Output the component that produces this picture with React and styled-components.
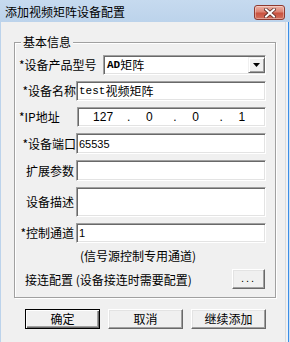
import React from 'react';
import styled, { createGlobalStyle } from 'styled-components';

const Global = createGlobalStyle`
  html, body { margin: 0; padding: 0; background: #f0f0f0; }
  body {
    width: 290px; height: 342px; overflow: hidden;
    font-family: "Noto Sans CJK SC", "Noto Sans", sans-serif;
    font-size: 12px; color: #000;
  }
`;

const Window = styled.div`
  width: 290px; height: 342px;
  display: flex; flex-direction: column;
  background: #f0f0f0;
`;

const TitleBar = styled.div`
  height: 22px; flex: none;
  display: flex; align-items: flex-start; justify-content: space-between;
  padding: 0 5px 0 5px;
  background: linear-gradient(#c6daef, #bcd3eb);
`;

const Title = styled.div`
  font-size: 12px; line-height: 14px; margin-top: 5px; color: #000;
`;

const CloseBtn = styled.div`
  width: 29px; height: 13px; margin-top: 5px;
  border: 1px solid #8e3a30; border-radius: 3px;
  background: linear-gradient(#eeb3a6 0%, #dc8474 45%, #c9523f 55%, #d2705d 100%);
  display: flex; align-items: center; justify-content: center;
  box-shadow: inset 0 0 0 1px rgba(255,255,255,0.35);
`;

const Body = styled.div`
  flex: 1; display: flex;
`;

const Client = styled.div`
  flex: 1; display: flex; flex-direction: column;
  border-left: 1px solid #bcd3eb;
  background: #f0f0f0;
`;

const RightFrame = styled.div`
  width: 5px; flex: none;
  background: linear-gradient(to right, #dcdcdc 0 1px, #eef2f7 1px 3px, #3a8ee6 3px 4px, #cfe1f5 4px 5px);
`;

const Group = styled.div`
  position: relative;
  margin: 20px 0 0 13px;
  width: 260px; height: 254px;
  border: 1px solid #a0a0a0;
  box-shadow: inset 1px 1px 0 #fff, 1px 1px 0 #fff;
  padding: 12px 9px 0 4px;
  box-sizing: border-box;
  width: 262px; height: 256px;
  display: flex; flex-direction: column; gap: 6px;
`;

const Legend = styled.div`
  position: absolute; left: 6px; top: -8px;
  padding: 0 2px; background: #f0f0f0;
  font-size: 12px; line-height: 14px;
`;

const Row = styled.div`
  display: flex; align-items: center;
  height: ${p => p.$h || 20}px;
`;

const Label = styled.div`
  width: ${p => p.$w}px; flex: none;
  text-align: ${p => p.$align || 'right'};
  white-space: nowrap;
  font-size: 12px; line-height: 14px;
  padding-right: ${p => p.$pr || 0}px;
  box-sizing: border-box;
`;

const Field = styled.div`
  flex: 1; height: 100%;
  box-sizing: border-box;
  background: #fff;
  border: 1px solid;
  border-color: #a0a0a0 #fff #fff #a0a0a0;
  box-shadow: inset 1px 1px 0 #696969, inset -1px -1px 0 #e3e3e3;
  display: flex; align-items: ${p => p.$top ? 'flex-start' : 'center'};
  padding-left: 2px;
  overflow: hidden; white-space: nowrap;
`;

const Mono = styled.span`
  font-family: "Liberation Mono", monospace; font-size: 11px;
`;

const Cjk = styled.span`
  font-family: "Noto Sans CJK SC", sans-serif; font-size: 12px; line-height: 14px;
`;

const Num = styled.span`
  font-family: "Liberation Sans", sans-serif; font-size: 11px;
`;

const SelectText = styled.div`
  flex: 1; display: flex; align-items: center; padding-left: 1px;
`;

const DropBtn = styled.div`
  width: 17px; height: 16px; flex: none; margin-right: 0px;
  box-sizing: border-box;
  background: #f0f0f0;
  border: 1px solid; border-color: #f0f0f0 #696969 #696969 #f0f0f0;
  box-shadow: inset 1px 1px 0 #fff, inset -1px -1px 0 #a0a0a0;
  display: flex; align-items: center; justify-content: center;
`;

const IpGrid = styled.div`
  flex: 1; display: grid;
  grid-template-columns: repeat(4, 1fr);
  font-family: "Liberation Sans", sans-serif; font-size: 12px;
`;

const IpCell = styled.div`
  position: relative; text-align: center;
`;

const IpDot = styled.span`
  position: absolute; right: -4px; top: 0;
`;

const Hint = styled.div`
  height: 14px; line-height: 14px; padding-left: 61px; white-space: nowrap;
`;

const ConnectRow = styled.div`
  display: flex; align-items: center; height: 20px;
  padding-left: 6px; padding-right: 1px;
  white-space: nowrap;
`;

const Button = styled.div`
  width: ${p => p.$w || 75}px; height: ${p => p.$h || 20}px;
  box-sizing: border-box; flex: none;
  background: #f0f0f0;
  display: flex; align-items: center; justify-content: center;
  font-size: 12px; line-height: 14px;
  border: 1px solid;
  border-color: ${p => p.$default ? '#000' : '#fff #696969 #696969 #fff'};
  box-shadow: ${p => p.$default
    ? 'inset 1px 1px 0 #fff, inset -1px -1px 0 #696969, inset -2px -2px 0 #a0a0a0'
    : 'inset -1px -1px 0 #a0a0a0, inset 1px 1px 0 #e3e3e3'};
  margin-left: ${p => p.$ml || 0}px;
`;

const Buttons = styled.div`
  display: flex; gap: 8px;
  margin: 11px 0 0 24px;
`;

const Dots = styled.span`
  font-family: "Liberation Sans", sans-serif; font-size: 11px; letter-spacing: 2px;
  margin-top: -3px;
`;

export default function App() {
  return (
    <Window>
      <Global />
      <TitleBar>
        <Title>添加视频矩阵设备配置</Title>
        <CloseBtn>
          <svg width="12" height="10" viewBox="0 0 12 10">
            <path d="M2 1.5 L10 8.5 M10 1.5 L2 8.5" stroke="#5a2a24" strokeWidth="3.6" strokeLinecap="square" />
            <path d="M2 1.5 L10 8.5 M10 1.5 L2 8.5" stroke="#fff" strokeWidth="2" strokeLinecap="square" />
          </svg>
        </CloseBtn>
      </TitleBar>
      <Body>
        <Client>
          <Group>
            <Legend>基本信息</Legend>
            <Row>
              <Label $w={84} $align="left">*设备产品型号</Label>
              <Field>
                <SelectText><Mono style={{ fontWeight: 700 }}>AD</Mono><Cjk>矩阵</Cjk></SelectText>
                <DropBtn>
                  <svg width="7" height="4" viewBox="0 0 7 4"><path d="M0 0 H7 L3.5 4 Z" fill="#000" /></svg>
                </DropBtn>
              </Field>
            </Row>
            <Row>
              <Label $w={57}>*设备名称</Label>
              <Field><Mono>test</Mono><Cjk>视频矩阵</Cjk></Field>
            </Row>
            <Row>
              <Label $w={58} $align="left">*IP地址</Label>
              <Field>
                <IpGrid>
                  <IpCell>127<IpDot>.</IpDot></IpCell>
                  <IpCell>0<IpDot>.</IpDot></IpCell>
                  <IpCell>0<IpDot>.</IpDot></IpCell>
                  <IpCell>1</IpCell>
                </IpGrid>
              </Field>
            </Row>
            <Row $h={21}>
              <Label $w={57}>*设备端口</Label>
              <Field><Num>65535</Num></Field>
            </Row>
            <Row $h={21}>
              <Label $w={57} $pr={2}>扩展参数</Label>
              <Field />
            </Row>
            <Row $h={30}>
              <Label $w={57} $pr={2}>设备描述</Label>
              <Field />
            </Row>
            <Row>
              <Label $w={57} $pr={2}>*控制通道</Label>
              <Field><Num>1</Num></Field>
            </Row>
            <Hint>(信号源控制专用通道)</Hint>
            <ConnectRow>
              接连配置 (设备接连时需要配置)
              <Button $w={33} $h={20} style={{ marginLeft: 'auto' }}><Dots>...</Dots></Button>
            </ConnectRow>
          </Group>
          <Buttons>
            <Button $default>确定</Button>
            <Button>取消</Button>
            <Button>继续添加</Button>
          </Buttons>
        </Client>
        <RightFrame />
      </Body>
    </Window>
  );
}
